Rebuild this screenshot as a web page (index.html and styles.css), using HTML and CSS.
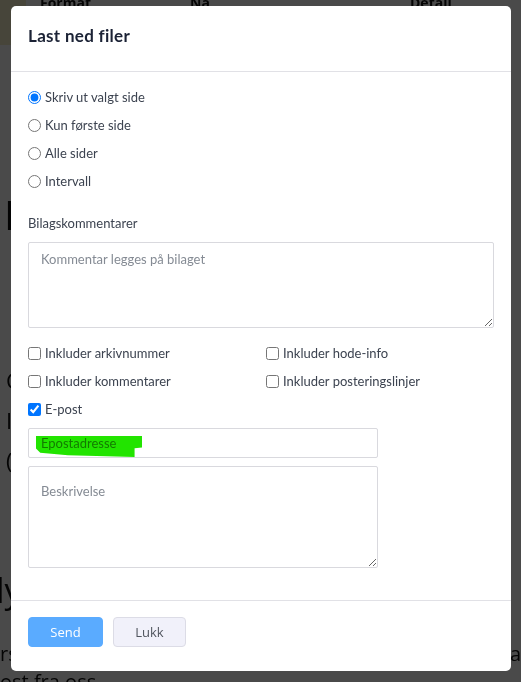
FILE: index.html
```html
<!DOCTYPE html>
<html lang="no">
<head>
<meta charset="utf-8">
<title>Last ned filer</title>
<link rel="stylesheet" href="styles.css">
</head>
<body>
<div class="page">
  <div class="page-top">
    <span class="pt-side"></span><span class="pt-a">Format</span><span class="pt-b">Nå</span><span class="pt-c">Detalj</span>
  </div>
  <div class="page-h1">I</div>
  <div class="page-ps">
    <div class="page-p">C</div>
    <div class="page-p">I</div>
    <div class="page-p">(</div>
  </div>
  <div class="page-h2">ly</div>
  <div class="page-line"><span>rs</span><span>na</span></div>
  <div class="page-line2">ost fra oss</div>
</div>
<div class="overlay"></div>
<div class="modal">
  <div class="modal-header">
    <h1 class="modal-title">Last ned filer</h1>
  </div>
  <div class="modal-body">
    <label class="opt"><input type="radio" name="pages" checked><span>Skriv ut valgt side</span></label>
    <label class="opt"><input type="radio" name="pages"><span>Kun første side</span></label>
    <label class="opt"><input type="radio" name="pages"><span>Alle sider</span></label>
    <label class="opt"><input type="radio" name="pages"><span>Intervall</span></label>

    <div class="field-label">Bilagskommentarer</div>
    <textarea class="ta ta-comment" placeholder="Kommentar legges på bilaget"></textarea>

    <div class="checks">
      <label class="opt"><input type="checkbox"><span>Inkluder arkivnummer</span></label>
      <label class="opt"><input type="checkbox"><span>Inkluder hode-info</span></label>
      <label class="opt"><input type="checkbox"><span>Inkluder kommentarer</span></label>
      <label class="opt"><input type="checkbox"><span>Inkluder posteringslinjer</span></label>
    </div>
    <label class="opt"><input type="checkbox" checked><span>E-post</span></label>

    <div class="email-wrap">
      <input class="email" type="text" placeholder="Epostadresse">
      <span class="marker"></span>
    </div>
    <textarea class="ta ta-desc" placeholder="Beskrivelse"></textarea>
  </div>
  <div class="modal-footer">
    <button class="btn btn-primary">Send</button>
    <button class="btn btn-light">Lukk</button>
  </div>
</div>
</body>
</html>
```
FILE: styles.css
```css
* { box-sizing: border-box; }
html, body { margin: 0; padding: 0; }
body {
  width: 521px;
  height: 682px;
  overflow: hidden;
  background: #fff;
  font-family: Lato, "Open Sans", sans-serif;
  position: relative;
}
.page { color: #111; font-family: "Open Sans", sans-serif; overflow: hidden; }
.page-top {
  display: flex;
  height: 45px;
  font-size: 14px;
  font-weight: 700;
  line-height: 6px;
  white-space: nowrap;
}
.pt-side { width: 26px; height: 45px; background: #f3eec6; flex: none; }
.pt-a { margin-left: 14px; width: 150px; flex: none; }
.pt-b { width: 220px; flex: none; }
.pt-c { flex: none; }
.page-h1 { font-size: 40px; line-height: 40px; margin-top: 150px; margin-left: 4px; }
.page-ps { margin-top: 125px; }
.page-p { font-size: 22px; line-height: 40px; margin-left: 6px; }
.page-h2 { font-size: 34px; line-height: 50px; margin-top: 85px; margin-left: -4px; }
.page-line { display: flex; justify-content: space-between; font-size: 20px; line-height: 28px; margin-top: 25px; }
.page-line2 { font-size: 20px; line-height: 28px; }

.overlay {
  position: absolute;
  inset: 0;
  background: rgba(0, 0, 0, 0.71);
}

.modal {
  position: absolute;
  left: 11px;
  top: 6px;
  width: 500px;
  height: 665px;
  background: #fff;
  border-radius: 5px;
  display: flex;
  flex-direction: column;
  color: #3c4350;
}
.modal-header {
  height: 66px;
  padding: 20px 17px 0;
  border-bottom: 1px solid #e1e1e6;
}
.modal-title {
  margin: 0;
  font-size: 17px;
  line-height: 20px;
  font-weight: 700;
  letter-spacing: 0.3px;
  color: #1b2235;
}
.modal-body {
  padding: 11px 17px 0;
  height: 529px;
  border-bottom: 1px solid #e1e1e6;
  display: flex;
  flex-direction: column;
  align-items: flex-start;
}
.opt {
  display: flex;
  align-items: center;
  height: 28px;
  font-size: 13px;
  color: #3c4350;
}
.opt input {
  margin: 0 4px 0 0;
  width: 13px;
  height: 13px;
}
.field-label {
  font-size: 13px;
  line-height: 18px;
  margin-top: 19px;
  color: #3c4350;
}
.ta {
  display: block;
  border: 1px solid #d9d9de;
  border-radius: 2px;
  font-family: Lato, "Open Sans", sans-serif;
  font-size: 13px;
  padding: 8px 12px;
  color: #3c4350;
  resize: vertical;
  outline: none;
}
.ta::placeholder, .email::placeholder { color: #858b94; }
.ta-comment { width: 466px; height: 86px; margin-top: 10px; }
.checks {
  display: grid;
  grid-template-columns: 238px 228px;
  margin-top: 11px;
}
.email-wrap {
  position: relative;
  margin-top: 5px;
}
.email {
  display: block;
  width: 350px;
  height: 30px;
  border: 1px solid #d9d9de;
  border-radius: 2px;
  padding: 0 12px;
  font-family: Lato, "Open Sans", sans-serif;
  font-size: 13px;
  outline: none;
}
.marker {
  position: absolute;
  left: 8px;
  top: 8px;
  width: 106px;
  height: 21px;
  background: #22e400;
  mix-blend-mode: multiply;
  clip-path: polygon(0 0, 100% 0, 100% 55%, 93% 58%, 93% 100%, 30% 92%, 4% 80%, 0 60%);
}
.ta-desc { width: 350px; height: 102px; margin-top: 8px; padding-top: 16px; }

.modal-footer {
  display: flex;
  gap: 10px;
  padding: 16px 17px 0;
}
.btn {
  height: 30px;
  border-radius: 4px;
  font-family: "Open Sans", sans-serif;
  font-size: 13px;
  padding: 0;
  cursor: pointer;
}
.btn-primary {
  width: 75px;
  background: #5aabff;
  border: 1px solid #5aabff;
  color: #fff;
}
.btn-light {
  width: 73px;
  background: #f1f1fa;
  border: 1px solid #dcdce6;
  color: #50555e;
}
```
